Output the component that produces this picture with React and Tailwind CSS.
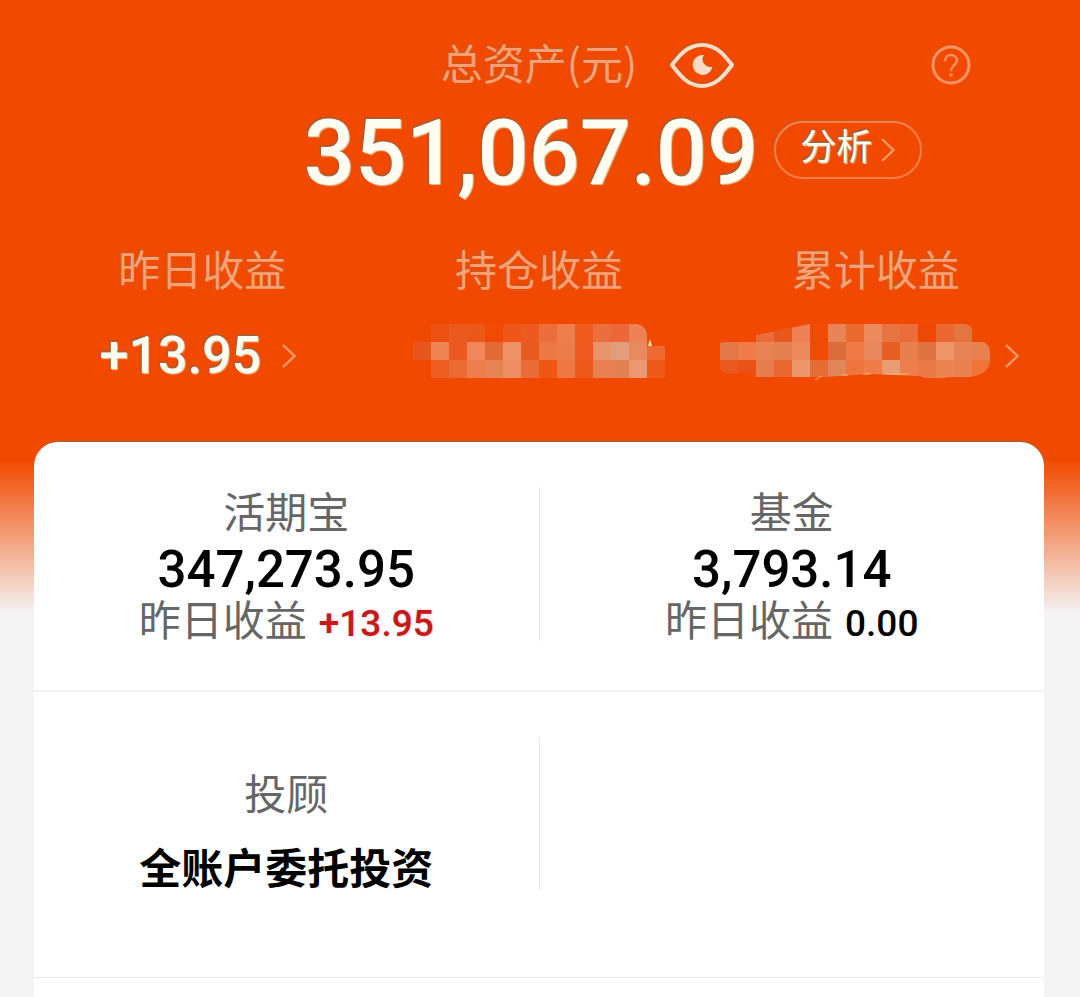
const sans = "font-['Noto_Sans_CJK_SC',sans-serif]";
const digits = "font-[Roboto,'Noto_Sans_CJK_SC',sans-serif] font-medium";
const labelGlow = "text-[#ffa074] [text-shadow:-1px_-1px_1px_#b8602f]";
const valueGlow = "text-[#fffdf2] [text-shadow:-1px_-1px_2px_#6f6f5c,1px_1px_1px_#ffc890]";

const HOLDING = [
  ["#f04a02", "#ed5010", "#ea5a1e", "#ec5818", "#f04a04", "#ee561a", "#ec5a20", "#ec6e3a", "#ee7e4c", "#f05a1e", "#ea6e3e", "#ec683a", "#ee8256", null],
  ["#e6561e", "#ee8454", "#ea5a20", "#f0865a", "#e26a34", "#f09468", "#e85c22", "#ee7844", "#ec7c4a", "#f05a20", "#e8946c", "#e29e7c", "#e88a60", "#f06a30"],
  [null, "#ee5e24", "#ec6a34", "#ee7e4c", "#e88454", "#ee8e62", "#ea6c38", "#f05812", "#ee7844", "#ee581a", "#ea8052", "#e28252", "#ec9870", "#f05a18"],
];

const TOTAL = [
  [null, null, "#ea6c38", "#e6581e", "#ee8254", "#f04a04", "#e88458", "#ea6a30", "#ec8a5e", "#e87442", "#ec6c3a", "#f04804", "#ea6830", "#e67440", null],
  ["#e27848", "#f07a48", "#e88454", "#e68050", "#ec8a5c", "#f04a04", "#dc6c3a", "#f07844", "#e8885c", "#e85e22", "#e8804e", "#e07440", "#f0946a", "#e88458", "#e88050"],
  ["#ea5a1e", "#e95214", "#e87c4c", "#ea6830", "#ee966c", "#e66c36", "#e08658", "#ee7440", "#f07c4a", "#e89c74", "#ee7e4e", "#ea7848", "#ec8452", "#ea8050", "#f0743a"],
];

function Mosaic({ id, rows, outline, className, label, children }) {
  const width = rows[0].length * 18;
  return (
    <svg
      className={className}
      width={width}
      height="56"
      viewBox={`0 0 ${width} 56`}
      role="img"
      aria-label={label}
    >
      <clipPath id={id}>
        <path d={outline} />
      </clipPath>
      <g clipPath={`url(#${id})`} shapeRendering="crispEdges">
        {rows.map((row, y) =>
          row.map((fill, x) =>
            fill ? <rect key={`${x}-${y}`} x={x * 18} y={y * 18} width="18" height="18" fill={fill} /> : null
          )
        )}
      </g>
      {children}
    </svg>
  );
}

function Chevron() {
  return (
    <svg width="16" height="26" viewBox="0 0 16 26" fill="none" stroke="#ff9a68" strokeWidth="2.4" aria-hidden="true">
      <path d="M2 2 13.5 13 2 24" />
    </svg>
  );
}

function Eye() {
  return (
    <svg width="66" height="48" viewBox="0 0 66 48" fill="none" aria-hidden="true">
      <path
        d="M2 23C9 14 17 3 32 3s23 11 30 20C55 32 47 44 32 44S9 32 2 23Z"
        stroke="#a9602f"
        strokeWidth="4"
        strokeLinejoin="round"
      />
      <path
        d="M3 24C10 15 18 4 33 4s23 11 30 20C56 33 48 45 33 45S10 33 3 24Z"
        stroke="#ffdcc4"
        strokeWidth="4"
        strokeLinejoin="round"
      />
      <path d="M35 14a10 10 0 1 0 8.500 11.500A7.500 7.500 0 0 1 35 14Z" fill="#ffdcc8" />
    </svg>
  );
}

function Help() {
  return (
    <svg width="40" height="40" viewBox="0 0 40 40" fill="none" aria-hidden="true">
      <circle cx="19.500" cy="19.500" r="18" stroke="#b8602f" strokeWidth="3" />
      <circle cx="20" cy="20" r="18" stroke="#ff9262" strokeWidth="3" />
      <path d="M14 16.500c0-4 2.500-6.500 6-6.500s6 2.300 6 5.500c0 4.500-6 5-6 10.500" stroke="#ff9262" strokeWidth="2.400" />
      <path d="M18.500 28.500h3v3h-3z" fill="#ff9262" />
    </svg>
  );
}

function Holding({ name, amount, income, incomeClass }) {
  return (
    <div className="flex flex-1 flex-col items-center pt-[38px] whitespace-nowrap">
      <h2 className="text-[42px] leading-[60px] text-[#666]">{name}</h2>
      <p className={`${digits} text-[51px] leading-[60px] text-black`}>{amount}</p>
      <p className="flex items-baseline gap-3 text-[42px] leading-[36px] text-[#666]">
        昨日收益
        <span className={`${digits} ${incomeClass} text-[37px]`}>{income}</span>
      </p>
    </div>
  );
}

export default function App() {
  return (
    <main
      className={`${sans} flex min-h-screen flex-col bg-[#f4f4f4] bg-[linear-gradient(to_bottom,#f14a00_0,#f14a00_460px,#f4f4f4_614px)] pr-9 pl-[34px]`}
    >
      <header className="pt-9">
        <div className="grid h-[58px] grid-cols-[1fr_auto_1fr] items-center">
          <h1 className={`${labelGlow} col-start-2 self-start text-[42px] leading-[52px]`}>总资产(元)</h1>
          <div className="flex items-center pr-[73px] pl-8">
            <button type="button" aria-label="隐藏金额">
              <Eye />
            </button>
            <button type="button" aria-label="帮助" className="ml-auto">
              <Help />
            </button>
          </div>
        </div>

        <div className="grid h-28 grid-cols-[1fr_auto_1fr] items-center pr-4">
          <p className={`${digits} ${valueGlow} col-start-2 pt-2 text-[90px] leading-[104px]`}>351,067.09</p>
          <div className="flex pl-4">
            <button
              type="button"
              className="flex h-[58px] w-[148px] shrink-0 items-center justify-center gap-2 rounded-full border-2 border-[#ff7e46] shadow-[-1px_-1px_2px_#b8602f]"
            >
              <span className={`${valueGlow} pb-3 text-[36px] leading-[42px]`}>分析</span>
              <Chevron />
            </button>
          </div>
        </div>

        <div className="mt-8 grid grid-cols-3 pb-[54px]">
          <section className="flex flex-col items-center">
            <h2 className={`${labelGlow} text-[42px] leading-[60px]`}>昨日收益</h2>
            <button type="button" className="mt-[26px] flex h-16 items-center gap-5 pr-2">
              <span className={`${digits} ${valueGlow} text-[52px] leading-[64px]`}>+13.95</span>
              <Chevron />
            </button>
          </section>
          <section className="flex flex-col items-center">
            <h2 className={`${labelGlow} text-[42px] leading-[60px]`}>持仓收益</h2>
            <div className="mt-[26px] flex h-16 items-start">
              <Mosaic
                id="holding-outline"
                rows={HOLDING}
                label="持仓收益已遮挡"
                outline="M0 0H224Q234 2 234 12V22H252V54H0Z"
              >
                <path d="M235 22l2-7 2 7z" fill="#ffe2a0" />
              </Mosaic>
            </div>
          </section>
          <section className="flex flex-col items-center">
            <h2 className={`${labelGlow} text-[42px] leading-[60px]`}>累计收益</h2>
            <button type="button" className="mt-[26px] flex h-16 items-center gap-[14px] pr-3">
              <Mosaic
                id="total-outline"
                className="self-start"
                rows={TOTAL}
                label="累计收益已遮挡"
                outline="M0 20Q0 18 3 18L36 16V11L90 0H246Q254 3 258 14Q270 20 270 28V36Q270 50 250 53H235Q226 53 224 54H204L200 52L150 50L105 53H36L30 49L8 50Q0 48 0 42Z"
              >
                <path d="M95 56l7-4M122 51h6M143 50h8M166 50h22" stroke="#ffb56a" strokeWidth="1" />
              </Mosaic>
              <Chevron />
            </button>
          </section>
        </div>
      </header>

      <div className="flex flex-1 flex-col rounded-t-3xl bg-white shadow-[0_-2px_1px_-1px_#8a6a4a]">
        <div className="flex h-[250px] border-b-2 border-[#f2f2f2]">
          <Holding
            name="活期宝"
            amount="347,273.95"
            income="+13.95"
            incomeClass="text-[#c41a1a] [text-shadow:0_0_2px_#ff9a9a]"
          />
          <div className="mt-[45px] h-[154px] w-px bg-[#e8e8e8]" />
          <Holding name="基金" amount="3,793.14" income="0.00" incomeClass="text-black" />
        </div>
        <div className="flex h-[286px] border-b border-[#e8e8e8]">
          <div className="flex flex-1 flex-col items-center pt-[70px]">
            <h2 className="text-[42px] leading-[60px] text-[#666]">投顾</h2>
            <p className="mt-[14px] text-[42px] leading-[60px] font-bold text-black">全账户委托投资</p>
          </div>
          <div className="mt-[45px] h-[154px] w-px bg-[#e8e8e8]" />
          <div className="flex-1" />
        </div>
      </div>
    </main>
  );
}
